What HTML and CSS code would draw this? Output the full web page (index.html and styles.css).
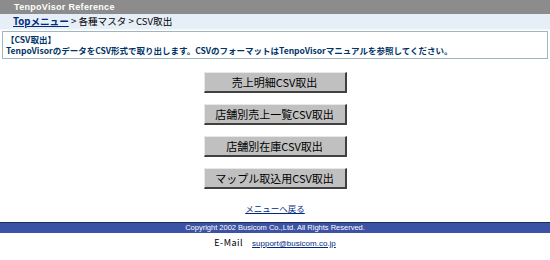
FILE: index.html
```html
<!DOCTYPE html>
<html lang="ja">
<head>
<meta charset="utf-8">
<title>TenpoVisor Reference</title>
<link rel="stylesheet" href="styles.css">
</head>
<body>
<div class="title">TenpoVisor Reference</div>
<div class="crumb"><a href="#" class="crumb-link">Topメニュー</a> &gt; 各種マスタ &gt; CSV取出</div>
<div class="notice">
  <div>【CSV取出】</div>
  <div>TenpoVisorのデータをCSV形式で取り出します。CSVのフォーマットはTenpoVisorマニュアルを参照してください。</div>
</div>
<div class="buttons">
  <button class="btn">売上明細CSV取出</button>
  <button class="btn">店舗別売上一覧CSV取出</button>
  <button class="btn">店舗別在庫CSV取出</button>
  <button class="btn">マップル取込用CSV取出</button>
</div>
<div class="back"><a href="#">メニューへ戻る</a></div>
<div class="footer">Copyright 2002 Busicom Co.,Ltd. All Rights Reserved.</div>
<div class="mail"><span class="mail-label">E-Mail</span><a href="#">support@busicom.co.jp</a></div>
</body>
</html>
```
FILE: styles.css
```css
html, body {
  margin: 0;
  padding: 0;
  background: #ffffff;
  font-family: "Noto Sans CJK JP", "Liberation Sans", sans-serif;
  color: #000;
}
.title {
  height: 14px;
  line-height: 14px;
  background: #8c8c8c;
  color: #ffffff;
  font-family: "Liberation Sans", sans-serif;
  font-weight: bold;
  font-size: 9px;
  padding-left: 14px;
  letter-spacing: 0.3px;
}
.crumb {
  height: 15px;
  line-height: 15px;
  background: #e6eef8;
  padding-left: 13px;
  font-size: 9.6px;
  border-bottom: 1px solid #f4f8fc;
}
.crumb-link {
  color: #002a80;
  font-weight: bold;
}
.notice {
  margin: 1px 2px 0 2px;
  border: 1px solid #9fb6bc;
  padding: 2px 3px 2px 3px;
  font-size: 8.5px;
  line-height: 11px;
  font-weight: bold;
  color: #003366;
}
.buttons {
  display: flex;
  flex-direction: column;
  align-items: center;
  gap: 11px;
  margin-top: 13px;
}
.btn {
  width: 143px;
  height: 21px;
  padding: 0;
  background: #c0c0c0;
  border-style: solid;
  border-width: 1px 2px 2px 1px;
  border-color: #e8e8e8 #404040 #404040 #e8e8e8;
  font-family: "Noto Sans CJK JP", sans-serif;
  font-size: 11px;
  line-height: 18px;
  color: #000;
}
.back {
  text-align: center;
  margin-top: 12px;
  font-size: 8.5px;
  line-height: 14px;
}
.back a {
  color: #002a80;
}
.footer {
  margin-top: 7px;
  height: 10px;
  line-height: 10px;
  background: #3c52a4;
  border-top: 1px solid #1c2a60;
  color: #ffffff;
  text-align: center;
  font-family: "Liberation Sans", sans-serif;
  font-size: 7.5px;
}
.mail {
  text-align: center;
  margin-top: 4px;
  font-size: 9px;
  line-height: 12px;
}
.mail-label {
  margin-right: 9px;
  letter-spacing: 0.5px;
}
.mail a {
  color: #002a80;
  font-family: "Liberation Sans", sans-serif;
  font-size: 8px;
}
```
